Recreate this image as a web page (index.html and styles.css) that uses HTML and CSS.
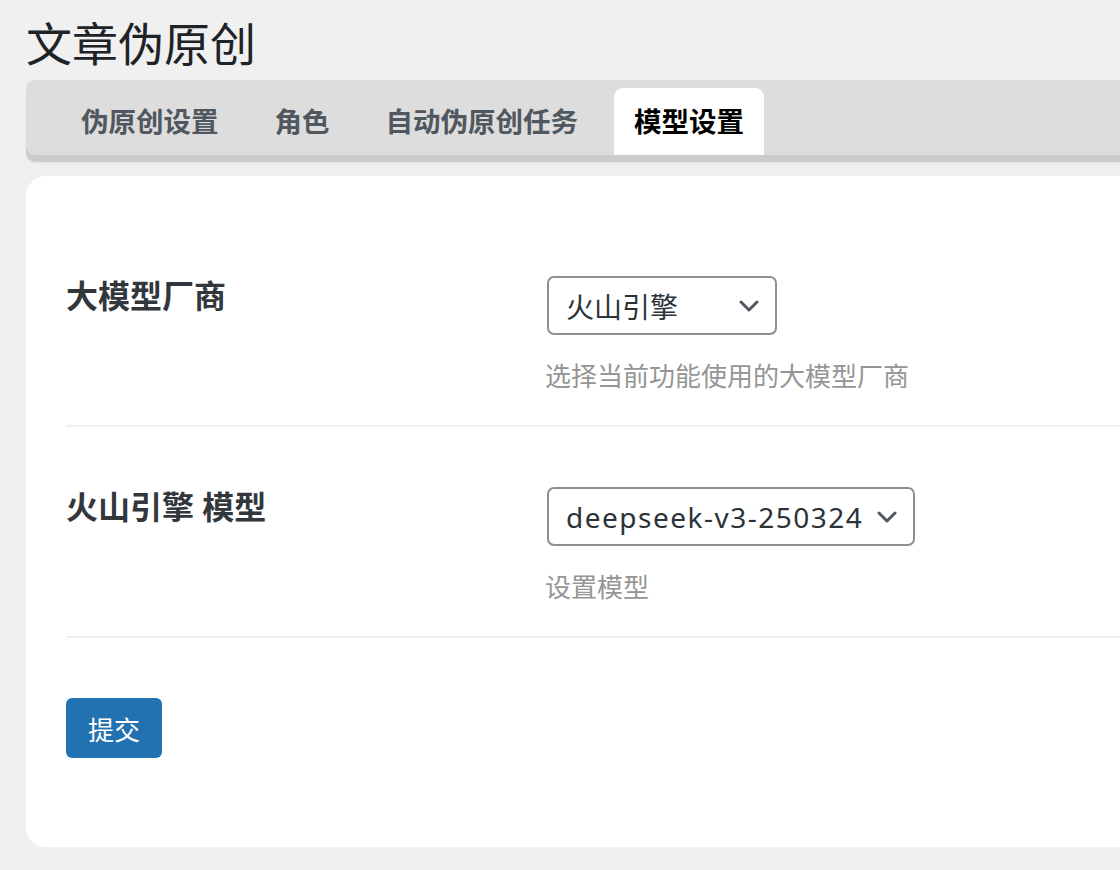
FILE: index.html
```html
<!DOCTYPE html>
<html lang="zh-CN">

<head>
    <meta charset="UTF-8">
    <meta name="viewport" content="width=device-width, initial-scale=1.0">
    <title>文章伪原创</title>
    <link rel="stylesheet" href="styles.css">
</head>

<body>
    <div class="wrap">
        <h1 class="page-title">文章伪原创</h1>

        <nav class="tabs">
            <a class="tab">伪原创设置</a>
            <a class="tab">角色</a>
            <a class="tab">自动伪原创任务</a>
            <a class="tab tab-active">模型设置</a>
        </nav>

        <div class="card">
            <form>
                <div class="row">
                    <div class="row-label">大模型厂商</div>
                    <div class="row-field">
                        <div class="select select-vendor">
                            <span>火山引擎</span>
                            <svg class="chevron" width="20" height="12" viewBox="0 0 20 12">
                                <path d="M2 2 L10 10 L18 2" fill="none" stroke="#50575e" stroke-width="3" stroke-linecap="round" stroke-linejoin="round"/>
                            </svg>
                        </div>
                        <p class="desc">选择当前功能使用的大模型厂商</p>
                    </div>
                </div>

                <div class="row">
                    <div class="row-label">火山引擎 模型</div>
                    <div class="row-field">
                        <div class="select select-model">
                            <span class="select-latin">deepseek-v3-250324</span>
                            <svg class="chevron" width="20" height="12" viewBox="0 0 20 12">
                                <path d="M2 2 L10 10 L18 2" fill="none" stroke="#50575e" stroke-width="3" stroke-linecap="round" stroke-linejoin="round"/>
                            </svg>
                        </div>
                        <p class="desc">设置模型</p>
                    </div>
                </div>

                <button type="button" class="button-primary">提交</button>
            </form>
        </div>
    </div>
</body>

</html>
```

FILE: styles.css
```css
body {
    margin: 0;
    background-color: #f0f0f0;
    font-family: "Noto Sans", "Noto Sans CJK SC", sans-serif;
    overflow: hidden;
}

.wrap {
    width: 1140px;
    padding-left: 26px;
}

.page-title {
    margin: 13px 0 7px 0;
    font-size: 46px;
    line-height: 60px;
    font-weight: 400;
    color: #1d2327;
}

.tabs {
    display: flex;
    height: 75px;
    padding: 8px 0 0 35px;
    box-sizing: border-box;
    background-color: #dddddd;
    border-radius: 9px 0 0 9px;
    box-shadow: 0 7px 0 #cbcbcb, 0 9px 3px rgba(0, 0, 0, 0.04);
}

.tab {
    padding: 0 20px;
    margin-right: 16px;
    height: 67px;
    line-height: 67px;
    font-size: 27.5px;
    font-weight: 700;
    color: #50575e;
    border-radius: 9px 9px 0 0;
    cursor: pointer;
}

.tab-active {
    background-color: #fff;
    color: #000;
}

.card {
    margin-top: 21px;
    background-color: #fff;
    border-radius: 20px 0 0 20px;
    padding: 40px 40px 89px;
}

.row {
    display: flex;
    padding: 60px 0 31px;
    border-bottom: 2px solid #f0f0f0;
}

.row-label {
    width: 481px;
    flex-shrink: 0;
    font-size: 32px;
    line-height: 40px;
    font-weight: 700;
    color: #32373c;
}

.select {
    display: inline-flex;
    align-items: center;
    justify-content: space-between;
    height: 59px;
    box-sizing: border-box;
    padding: 0 16px 0 17px;
    border: 2px solid #8c8f94;
    border-radius: 7px;
    font-size: 28px;
    color: #2c3338;
    cursor: pointer;
}

.select-vendor {
    width: 230px;
}

.select-model {
    width: 368px;
}

.select-latin {
    letter-spacing: 1.5px;
}

.chevron {
    display: block;
}

.desc {
    margin: 23px 0 0 -2px;
    font-size: 26px;
    line-height: 36px;
    color: #959595;
}

.button-primary {
    margin-top: 60px;
    height: 60px;
    padding: 0 22px;
    border: none;
    border-radius: 6px;
    background-color: #2271b1;
    color: #fff;
    font-family: "Noto Sans CJK SC", sans-serif;
    font-size: 26px;
    cursor: pointer;
}
```
